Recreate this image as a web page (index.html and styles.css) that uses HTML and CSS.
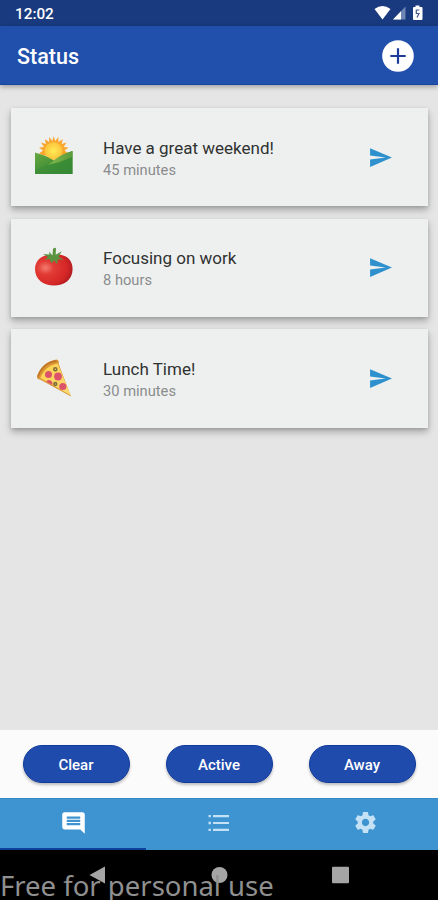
FILE: index.html
```html
<!DOCTYPE html>
<html lang="en">
<head>
<meta charset="utf-8">
<title>Status</title>
<link rel="stylesheet" href="styles.css">
</head>
<body>
<div class="statusbar">
  <span class="clock">12:02</span>
  <svg class="indicators" width="50" height="16" viewBox="0 0 50 16">
    <path fill="#fff" d="M0.5 4 Q8.5-2.2 16.5 4 L8.5 14.500Z"/>
    <path fill="#6f86b4" d="M31.500 1.500V14.500H19Z"/>
    <path fill="#fff" d="M27 6.200V14.500H19Z"/>
    <path fill="#fff" d="M41.500 0.500h4v1.500h2q1 0 1 1v11q0 1-1 1h-7.500q-1 0-1-1v-11q0-1 1-1h1.500z"/>
    <path fill="none" stroke="#43588b" stroke-width="1.200" d="M45.300 5h-3v3.500h2.700l-2 4"/>
  </svg>
</div>
<header class="appbar">
  <h1>Status</h1>
  <svg class="add" width="32" height="32" viewBox="0 0 32 32"><circle cx="16" cy="16" r="15.800" fill="#fff"/><path d="M16 8.300v15.400M8.300 16h15.400" stroke="#1c3c9b" stroke-width="2.200"/></svg>
</header>
<main class="list">
  <article class="card">
    <svg class="emoji" width="40" height="40" viewBox="0 0 40 40">
      <defs>
        <linearGradient id="hillBack" x1="0" x2="1"><stop offset="0" stop-color="#83b94c"/><stop offset="1" stop-color="#5b9b3c"/></linearGradient>
        <linearGradient id="hillFront" x1="0" y1="0" x2="1" y2="1"><stop offset="0" stop-color="#6baa43"/><stop offset="1" stop-color="#217a2c"/></linearGradient>
        <radialGradient id="sun"><stop offset="0" stop-color="#ffed58"/><stop offset="1" stop-color="#fcc23a"/></radialGradient>
      </defs>
      <path fill="#f9a62d" d="M19.500 0l1.700 5 3.200-4v5l4.400-3-1.200 5 5-1.500-3 4.500 5 .5-4 3 4 3-4 2H9l-4-2 4-3-4-3 5-.5-3-4.500 5 1.500-1.200-5 4.400 3V1l3.200 4z"/>
      <circle cx="19.500" cy="15" r="9" fill="url(#sun)"/>
      <path fill="url(#hillFront)" d="M1 16.500Q11 19 20 24.500Q28 18 38.500 15V38H1z"/>
      <path fill="url(#hillBack)" d="M20 24.500Q28 18 38.500 15V21Q27 26 14 29z"/>
      <path fill="#3e8e39" d="M1 34Q12 28 24 27Q32 26 38.500 21V38H1z" opacity=".65"/>
    </svg>
    <div class="text"><h2>Have a great weekend!</h2><p>45 minutes</p></div>
    <svg class="send" width="25" height="25" viewBox="0 0 24 24"><path d="M2.010 21L23 12 2.010 3 2 10l15 2-15 2z"/></svg>
  </article>
  <article class="card">
    <svg class="emoji" width="40" height="40" viewBox="0 0 40 40">
      <defs><radialGradient id="tomato" cx=".28" cy=".42" r=".75"><stop offset="0" stop-color="#f47c70"/><stop offset=".3" stop-color="#e23a34"/><stop offset=".75" stop-color="#d52727"/><stop offset="1" stop-color="#ad1b1e"/></radialGradient></defs>
      <path fill="url(#tomato)" d="M20 9C27 5.500 38.600 10 38.600 22C38.600 33 30 38.500 20 38.500S1 33 1 22C1 11 12 5.500 20 9z"/>
      <path fill="#5b9441" d="M18.500 8.500L19 1.500l3-.8-.3 7 6-3.500-3 5.500 5 3-6-.5-.5 5-3.200-4-2.500 3.300-2-4.500-5 1 3.500-3-5-3 6.500.5-.5-3z"/>
    </svg>
    <div class="text"><h2>Focusing on work</h2><p>8 hours</p></div>
    <svg class="send" width="25" height="25" viewBox="0 0 24 24"><path d="M2.010 21L23 12 2.010 3 2 10l15 2-15 2z"/></svg>
  </article>
  <article class="card">
    <svg class="emoji" width="40" height="40" viewBox="0 0 40 40">
      <defs><linearGradient id="cheese" x1="0" y1="0" x2="1" y2="1"><stop offset="0" stop-color="#ffd24d"/><stop offset="1" stop-color="#f8d978"/></linearGradient></defs>
      <path fill="#db9432" d="M22.500 1.500Q25.500 2 24.700 6L37 38.500 6 21.500Q2.500 21 3 18.500C6 9 13 3 22.500 1.500z"/>
      <path fill="url(#cheese)" d="M23.700 5.500L36.800 37.500 6.300 20C9 12.500 15 7 23.700 5.500z"/>
      <path fill="none" stroke="#bd7429" stroke-width="1.600" d="M4 18.500C7 10 13.500 4 22.500 3"/>
      <g fill="#dc526b"><circle cx="14.500" cy="16.500" r="3.500"/><circle cx="24" cy="18.500" r="3.900"/><circle cx="28.800" cy="28.500" r="3.600"/><path d="M12.300 23.400q1.600-2 4.300-1 2.500 1.500 1.600 4.700z"/></g>
      <g fill="none" stroke="#806e3a" stroke-width="1.600"><circle cx="21.300" cy="11.300" r="1.500"/><circle cx="21.300" cy="26" r="1.400"/></g>
    </svg>
    <div class="text"><h2>Lunch Time!</h2><p>30 minutes</p></div>
    <svg class="send" width="25" height="25" viewBox="0 0 24 24"><path d="M2.010 21L23 12 2.010 3 2 10l15 2-15 2z"/></svg>
  </article>
</main>
<div class="actions">
  <button>Clear</button><button>Active</button><button>Away</button>
</div>
<nav class="tabs">
  <div class="tab selected"><svg width="27" height="26" viewBox="0 0 24 24" preserveAspectRatio="none"><path d="M20 2H4c-1.100 0-2 .9-2 2v12c0 1.100.9 2 2 2h14l4 4V4c0-1.100-.9-2-2-2zm-2 12H6v-2h12v2zm0-3H6V9h12v2zm0-3H6V6h12v2z"/></svg></div>
  <div class="tab"><svg width="22" height="18" viewBox="0 0 22 18"><path d="M5 1h16v2.200H5zM5 7.900h16v2.200H5zM5 14.800h16V17H5zM.5.900h2.400v2.400H.5zM.5 7.800h2.400v2.400H.5zM.5 14.700h2.400v2.400H.5z"/></svg></div>
  <div class="tab"><svg width="25" height="25" viewBox="0 0 24 24"><path d="M19.430 12.980c.04-.32.07-.64.07-.98s-.03-.66-.07-.98l2.110-1.650c.19-.15.24-.42.120-.64l-2-3.460c-.12-.22-.39-.3-.61-.22l-2.490 1c-.52-.4-1.080-.73-1.690-.98l-.38-2.650C14.460 2.180 14.250 2 14 2h-4c-.25 0-.46.180-.49.420l-.38 2.650c-.61.250-1.170.590-1.690.980l-2.490-1c-.23-.09-.49 0-.61.220l-2 3.460c-.13.220-.07.490.12.640l2.110 1.650c-.04.320-.07.650-.07.980s.03.660.07.980l-2.110 1.650c-.19.150-.24.420-.12.640l2 3.460c.12.220.39.300.61.220l2.490-1c.52.400 1.080.730 1.690.980l.38 2.650c.03.240.24.420.49.420h4c.25 0 .46-.18.49-.42l.38-2.650c.61-.25 1.170-.59 1.690-.98l2.490 1c.23.090.49 0 .61-.22l2-3.460c.12-.22.07-.49-.12-.64l-2.110-1.650zM12 15.500c-1.930 0-3.500-1.570-3.500-3.500s1.570-3.500 3.500-3.500 3.500 1.570 3.500 3.500-1.570 3.500-3.500 3.500z"/></svg></div>
</nav>
<footer class="sysnav">
  <svg width="17" height="18" viewBox="0 0 17 18"><path d="M16 0.500v17L0.500 9z"/></svg>
  <svg width="17" height="18" viewBox="0 0 17 18"><circle cx="8.500" cy="9" r="8"/></svg>
  <svg width="17" height="18" viewBox="0 0 17 18"><rect y=".8" width="17" height="16.400" rx="1"/></svg>
  <span class="watermark">Free for personal use</span>
</footer>
</body>
</html>
```
FILE: styles.css
```css
* { box-sizing: border-box; margin: 0; padding: 0; }
body {
  width: 438px;
  height: 900px;
  overflow: hidden;
  display: flex;
  flex-direction: column;
  background: #e5e5e5;
  font-family: Roboto, sans-serif;
}
svg { display: block; flex: none; }
.statusbar {
  height: 26px;
  flex: none;
  display: flex;
  align-items: center;
  justify-content: space-between;
  padding: 0 14px 0 15px;
  background: #193a7f;
  color: #fff;
}
.clock { padding-top: 2px; font-size: 15.300px; line-height: 26px; font-weight: 500; }
.appbar {
  height: 59px;
  flex: none;
  display: flex;
  align-items: center;
  justify-content: space-between;
  padding: 1px 24px 0 17px;
  background: #204fac;
  border-bottom: 1px solid #1746a3;
  box-shadow: 0 2px 5px rgba(0,0,0,.3);
  color: #fff;
  z-index: 1;
}
h1 { padding-top: 2px; font-size: 21.500px; line-height: 30px; font-weight: 500; }
.list {
  flex: 1;
  display: flex;
  flex-direction: column;
  gap: 12.400px;
  padding: 23px 10.500px 0 11px;
}
.card {
  height: 98.300px;
  flex: none;
  display: flex;
  align-items: center;
  padding: 0 35px 0 23px;
  background: #eef0f0;
  box-shadow: 0 4px 7px rgba(0,0,0,.28), 0 1px 3px rgba(0,0,0,.1);
}
.emoji { margin-top: -2px; }
.text { flex: 1; padding: 3px 0 0 29px; white-space: nowrap; }
h2 { font-size: 17px; line-height: 22px; font-weight: 400; color: #303232; }
.text p { font-size: 14.700px; line-height: 22px; color: #8a8c8c; }
.send { fill: #2e91ce; }
.actions {
  height: 68px;
  flex: none;
  display: flex;
  justify-content: space-between;
  padding: 15px 22.500px;
  background: #fbfbfb;
}
button {
  width: 107px;
  height: 38px;
  padding-top: 2px;
  border: 1px solid #123b9c;
  border-radius: 19px;
  background: #1f4bac;
  box-shadow: 0 2px 3px rgba(0,0,0,.25);
  color: #fff;
  font: 500 15px Roboto, sans-serif;
}
.tabs {
  height: 52px;
  flex: none;
  display: grid;
  grid-template-columns: repeat(3, 1fr);
  background: #3e94d1;
  border-top: 1px solid #3489c4;
}
.tab {
  display: flex;
  align-items: center;
  justify-content: center;
  padding-bottom: 2px;
  border-bottom: 2px solid transparent;
}
.tab svg { fill: #c4e1f5; }
.tab.selected { border-color: #0c419c; }
.tab.selected svg { fill: #fff; }
.sysnav {
  position: relative;
  height: 50px;
  flex: none;
  display: flex;
  justify-content: space-between;
  padding: 16px 89px 0;
  background: #000;
  overflow: hidden;
}
.sysnav svg { fill: #a5a5a5; }
.watermark {
  position: absolute;
  left: 0;
  bottom: -4px;
  font: 27.500px/36px "Noto Sans", sans-serif;
  color: #909090;
  white-space: nowrap;
}
```
